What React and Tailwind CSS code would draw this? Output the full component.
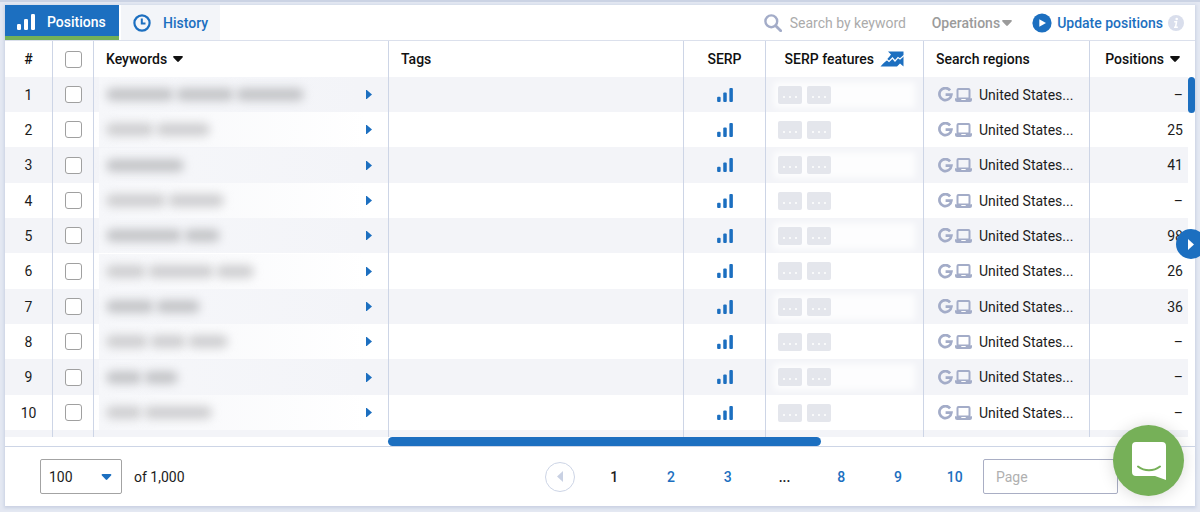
import { useState } from "react";

// words: widths of the hidden keyword's words
const rows = [
    { id: 1, words: [68, 58, 68], position: "–" },
    { id: 2, words: [48, 54], position: "25" },
    { id: 3, words: [78], position: "41" },
    { id: 4, words: [60, 56], position: "–" },
    { id: 5, words: [76, 36], position: "98" },
    { id: 6, words: [40, 66, 38], position: "26" },
    { id: 7, words: [48, 44], position: "36" },
    { id: 8, words: [42, 36, 40], position: "–" },
    { id: 9, words: [36, 34], position: "–" },
    { id: 10, words: [36, 68], position: "–" },
];

const pages = ["1", "2", "3", "...", "8", "9", "10"];

const BarsIcon = ({ className }) => (
    <svg viewBox="0 0 18 16" className={className} fill="currentColor" aria-hidden="true">
        <rect x="0" y="10" width="4" height="6" rx="1.2" />
        <rect x="7" y="5" width="4" height="11" rx="1.2" />
        <rect x="14" y="0" width="4" height="16" rx="1.2" />
    </svg>
);

const CaretDown = ({ className }) => (
    <svg viewBox="0 0 10 6" className={className} fill="currentColor" aria-hidden="true">
        <path d="M1 0h8c.8 0 1.2.8.6 1.400L5.800 5.500c-.4.500-1.200.500-1.600 0L.4 1.400C-.2.800.2 0 1 0z" />
    </svg>
);

const ClockIcon = () => (
    <svg viewBox="0 0 18 18" className="size-[18px]" fill="none" stroke="currentColor" aria-hidden="true">
        <circle cx="9" cy="9" r="7.600" strokeWidth="2.200" />
        <path d="M8.800 4.500v5h3.700" strokeWidth="2" />
    </svg>
);

const SearchIcon = () => (
    <svg viewBox="0 0 18 18" className="size-[18px] text-[#a3acc8]" fill="none" stroke="currentColor" aria-hidden="true">
        <circle cx="7.300" cy="7.300" r="5.900" strokeWidth="2.400" />
        <path d="M11.700 11.700l5 5" strokeWidth="2.800" strokeLinecap="round" />
    </svg>
);

const PlayIcon = () => (
    <svg viewBox="0 0 20 20" className="size-5" aria-hidden="true">
        <circle cx="10" cy="10" r="9.600" fill="#1c6fc0" />
        <path d="M7.300 6.200v7.600L14 10z" fill="#fff" />
    </svg>
);

const InfoIcon = () => (
    <svg viewBox="0 0 16 16" className="size-4" aria-hidden="true">
        <circle cx="8" cy="8" r="8" fill="#d9deec" />
        <circle cx="8.700" cy="4" r="1.300" fill="#fff" />
        <path d="M6.200 6.800h2.300l-.9 5M6 12.200h3.800" stroke="#fff" strokeWidth="1.500" fill="none" />
    </svg>
);

const TrendIcon = () => (
    <svg viewBox="0 0 24 16" className="h-4 w-6" aria-hidden="true">
        <path d="M8 .5h15.500v15l-3.500-3-3 3H.5L9.500 5.500l1.500-2z" fill="#1c6fc0" />
        <path d="M2.500 12L7 8.500l2 2L12.500 7l2.500 3 3-3.500 2 1.500L24 4.500" stroke="#fff" strokeWidth="1.200" fill="none" />
    </svg>
);

const GoogleIcon = () => (
    <svg viewBox="0 0 15 15" className="size-[15px]" fill="none" stroke="currentColor" strokeWidth="2.700" aria-hidden="true">
        <path d="M12.100 3.300A6 6 0 1 0 13.400 7.700H7.600" />
    </svg>
);

const LaptopIcon = () => (
    <svg viewBox="0 0 17 14" className="h-[14px] w-[17px]" fill="none" aria-hidden="true">
        <rect x="2.500" y="1" width="12" height="9.500" rx="1" stroke="currentColor" strokeWidth="2" />
        <path d="M0 10.200h17v1.500c0 1.300-.9 2.300-2.100 2.300H2.100C.9 14 0 13 0 11.700z" fill="currentColor" />
        <path d="M6.300 11h4.400v1H6.300z" fill="#fff" />
    </svg>
);

const Check = ({ label }) => (
    <input
        type="checkbox"
        aria-label={label}
        className="block size-[17px] mx-auto appearance-none rounded-[3px] border border-[#a0a0a0] bg-white checked:bg-[#1c6fc0]"
    />
);

const DotsChip = () => (
    <span className="relative flex h-[18px] w-6 items-center justify-center gap-1 rounded-[2px] bg-[#e4e6ec]">
        <i className="size-[2px] mt-1 rounded-full bg-white" />
        <i className="size-[2px] mt-1 rounded-full bg-white" />
        <i className="size-[2px] mt-1 rounded-full bg-white" />
    </span>
);

const Toolbar = () => (
    <div className="flex h-9 items-stretch border-b border-[#dbe0ec]">
        <button className="flex w-[114px] items-center gap-3 border-b-4 border-[#72b058] bg-[#1c6fc0] pl-3 pt-[2px] font-medium text-white">
            <BarsIcon className="h-4 w-[18px]" />
            Positions
        </button>
        <button className="ml-[2px] flex w-[99px] items-center gap-3 bg-[#f3f5f9] pl-3 font-medium text-[#1c6fc0]">
            <ClockIcon />
            History
        </button>
        <div className="ml-auto flex items-center pr-[11px]">
            <label className="flex items-center gap-2">
                <SearchIcon />
                <input
                    type="text"
                    aria-label="Search by keyword"
                    placeholder="Search by keyword"
                    className="w-[142px] outline-none placeholder:text-[#ababab]"
                />
            </label>
            <button className="flex items-center gap-[2px] font-medium text-[#9b9b9b]">
                Operations
                <CaretDown className="h-[6px] w-[10px]" />
            </button>
            <button className="ml-5 flex items-center gap-[5px] font-medium text-[#1c6fc0]">
                <PlayIcon />
                Update positions
            </button>
            <span className="ml-[5px]">
                <InfoIcon />
            </span>
        </div>
    </div>
);

const KeywordsTable = () => (
    <div className="flex">
        <table className="w-full table-fixed border-separate border-spacing-0 [&_td]:border-[#cdd5e6] [&_td]:p-0 [&_td:not(:last-child)]:border-r [&_th]:border-[#cdd5e6] [&_th]:p-0 [&_th]:font-medium [&_th:not(:last-child)]:border-r">
            <colgroup>
                <col className="w-12" />
                <col className="w-[41px]" />
                <col />
                <col />
                <col className="w-[82px]" />
                <col className="w-[158px]" />
                <col className="w-[166px]" />
                <col className="w-[98px]" />
            </colgroup>
            <thead>
                <tr className="h-9 text-left text-[#111]">
                    <th className="text-center">#</th>
                    <th><Check label="Select all" /></th>
                    <th>
                        <button className="ml-3 flex items-center gap-[6px]">
                            Keywords
                            <CaretDown className="h-[6px] w-[10px]" />
                        </button>
                    </th>
                    <th><span className="ml-3">Tags</span></th>
                    <th className="text-center">SERP</th>
                    <th>
                        <div className="flex items-center justify-end gap-[6px] pr-[19px]">
                            SERP features
                            <TrendIcon />
                        </div>
                    </th>
                    <th><span className="ml-3">Search regions</span></th>
                    <th>
                        <button className="ml-auto mr-2 flex items-center gap-[6px]">
                            Positions
                            <CaretDown className="h-[6px] w-[10px]" />
                        </button>
                    </th>
                </tr>
            </thead>
            <tbody>
                {rows.map((row) => (
                    <tr key={row.id} className="h-[35px] nth-[3n]:h-9 odd:bg-[#f3f4f8] group">
                        <td className="text-center">{row.id}</td>
                        <td><Check label={"Select row " + row.id} /></td>
                        <td>
                            <div className="flex items-center pl-[5px]">
                                <div className="flex h-[35px] flex-1 items-center gap-[2px] bg-linear-to-r from-[#f6f7fa] to-transparent pl-[7px]">
                                    {row.words.map((w, i) => (
                                        <span
                                            key={i}
                                            className="h-[13px] rounded-full bg-[#cfcfd1] blur-[5px] group-odd:bg-[#c4c5c8]"
                                            style={{ width: w }}
                                        />
                                    ))}
                                </div>
                                <button aria-label="Open keyword" className="mr-4 text-[#1c6fc0]">
                                    <svg viewBox="0 0 6 9" className="h-[9px] w-[6px]" fill="currentColor">
                                        <path d="M0 0h.8L6 4.500.8 9H0z" />
                                    </svg>
                                </button>
                            </div>
                        </td>
                        <td />
                        <td>
                            <BarsIcon className="mx-auto h-[14px] w-4 text-[#1c6fc0]" />
                        </td>
                        <td>
                            <div className="relative flex items-center gap-[5px] pl-3">
                                <span className="absolute -inset-y-1 left-2 right-2 bg-white/80 blur-[3px]" />
                                <DotsChip />
                                <DotsChip />
                            </div>
                        </td>
                        <td>
                            <div className="flex items-center pl-[14px] text-[#a3acc8]">
                                <GoogleIcon />
                                <span className="ml-[2px]"><LaptopIcon /></span>
                                <span className="ml-[7px] text-[#1c1c1c]">United States...</span>
                            </div>
                        </td>
                        <td className="text-right">
                            <span className="mr-[5px]">{row.position}</span>
                        </td>
                    </tr>
                ))}
                <tr className="h-[7px] bg-[#f3f4f8]">
                    <td /><td /><td /><td /><td /><td /><td /><td />
                </tr>
            </tbody>
        </table>
        <div className="w-[7px] shrink-0 pt-9">
            <div className="h-9 rounded-full bg-[#1c6fc0]" />
        </div>
    </div>
);

const Footer = () => {
    const [perPage, setPerPage] = useState("100");

    return (
        <div className="flex h-[59px] items-center pl-[35px] pr-[77px]">
            <div className="relative">
                <select
                    aria-label="Rows per page"
                    value={perPage}
                    onChange={(e) => setPerPage(e.target.value)}
                    className="block h-[35px] w-[82px] appearance-none rounded-[2px] border border-[#a3a3a3] bg-white pl-2"
                >
                    <option>50</option>
                    <option>100</option>
                </select>
                <CaretDown className="pointer-events-none absolute right-[10px] top-[15px] h-[6px] w-[11px] text-[#1c6fc0]" />
            </div>
            <span className="ml-3">of 1,000</span>
            <button aria-label="Previous page" className="ml-auto flex size-[30px] items-center justify-center rounded-full border border-[#cdd5e6] text-[#c9d1e3]">
                <svg viewBox="0 0 6 11" className="h-[11px] w-[6px]" fill="currentColor">
                    <path d="M6 0v11L0 5.500z" />
                </svg>
            </button>
            <nav className="ml-[11px] grid w-[397px] grid-cols-7 text-center font-medium">
                {pages.map((page) =>
                    page === "1" || page === "..." ? (
                        <span key={page}>{page}</span>
                    ) : (
                        <a key={page} href={"#page-" + page} className="text-[#1c6fc0]">{page}</a>
                    )
                )}
            </nav>
            <input
                type="text"
                aria-label="Page"
                placeholder="Page"
                className="h-[35px] w-[135px] rounded-[2px] border border-[#a9aec4] pl-3 outline-none placeholder:text-[#b0b0b0]"
            />
        </div>
    );
};

const App = () => {
    return (
        <div className="relative min-h-screen overflow-hidden bg-[#e4e8f2] font-[Roboto,sans-serif] text-[14px] leading-5 text-[#1c1c1c]">
            <div className="mb-[3px] h-[2px] bg-[#cbd3e4]" />
            <div className="mx-[5px] bg-white shadow-[0_1px_3px_1px_#c9d1e3]">
                <Toolbar />
                <KeywordsTable />
                <div className="border-b border-[#cdd5e6]">
                    <div className="ml-[383px] h-[9px] w-4/11 rounded-full bg-[#1c6fc0]" />
                </div>
                <Footer />
            </div>

            <button aria-label="Scroll right" className="absolute -right-[6px] top-[229px] flex size-[30px] items-center justify-center rounded-full bg-[#1c6fc0] text-white">
                <svg viewBox="0 0 6 11" className="h-[11px] w-[6px]" fill="currentColor">
                    <path d="M0 0l6 5.500L0 11z" />
                </svg>
            </button>

            <button aria-label="Open chat" className="absolute right-4 top-[425px] flex size-[71px] items-center justify-center rounded-full bg-[#76b058] shadow-[0_1px_16px_rgba(0,0,0,0.15)]">
                <svg viewBox="0 0 34 38" className="h-[38px] w-[34px]" aria-hidden="true">
                    <path d="M4 0h26a4 4 0 0 1 4 4v34l-11-4H4a4 4 0 0 1-4-4V4a4 4 0 0 1 4-4z" fill="#fff" />
                    <path d="M6 24.500c6.500 5 15.500 5 22 0" stroke="#76b058" strokeWidth="2" strokeLinecap="round" fill="none" />
                </svg>
            </button>
        </div>
    );
};

export default App;
